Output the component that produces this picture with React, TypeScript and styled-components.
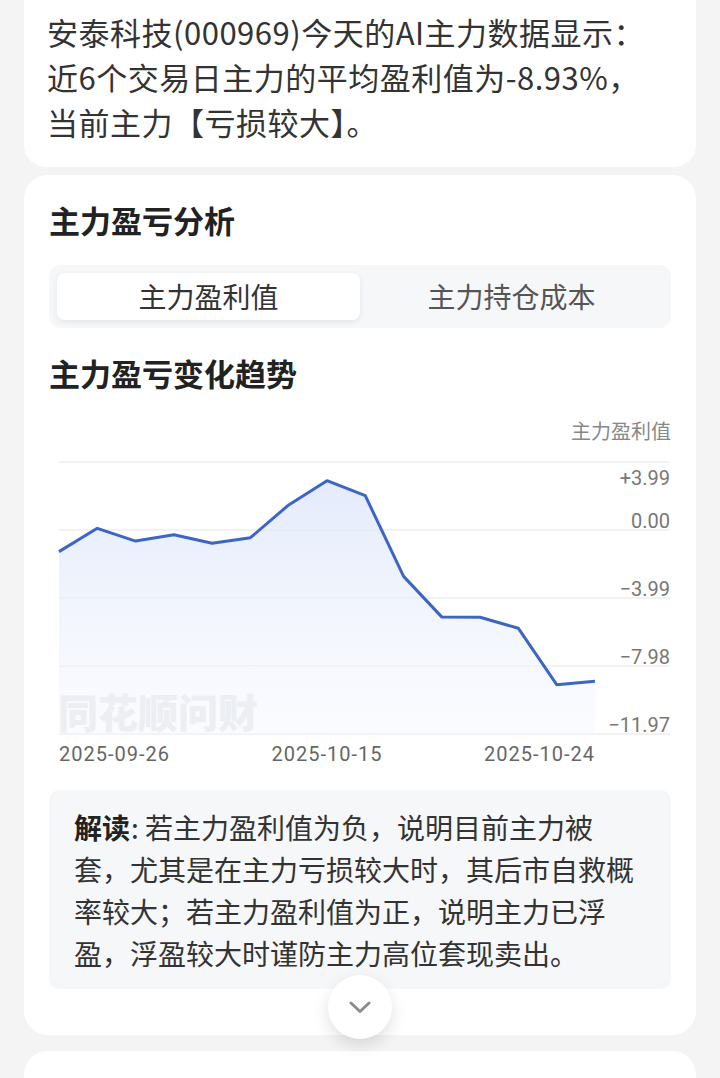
import React from 'react';
import styled, { createGlobalStyle } from 'styled-components';

const GlobalStyle = createGlobalStyle`
  html, body {
    margin: 0;
    padding: 0;
    background: #f4f4f4;
  }
  body {
    font-family: "Noto Sans CJK SC", "Noto Sans", sans-serif;
    color: #333;
  }
  * {
    box-sizing: border-box;
  }
`;

const Page = styled.div`
  display: flex;
  flex-direction: column;
  padding: 0 24px;
`;

const Card = styled.section<{ $gap?: number }>`
  background: #fff;
  border-radius: 24px;
  margin-bottom: ${({ $gap }) => $gap ?? 16}px;
`;

// Summary card (scrolled, top edge is off screen)
const SummaryCard = styled(Card)`
  border-radius: 0 0 22px 22px;
  padding: 9px 24px 23px 23px;
`;

const SummaryText = styled.p`
  margin: 0;
  font-size: 31px;
  line-height: 45px;
  letter-spacing: 0.5px;
  color: #333;
`;

// Analysis card
const AnalysisCard = styled(Card)`
  padding: 22px 25px 0;
`;

const Title = styled.h2<{ $top?: number }>`
  margin: ${({ $top }) => $top ?? 0}px 0 0;
  font-size: 31px;
  line-height: 46px;
  font-weight: 700;
  color: #222;
`;

const TabBar = styled.div`
  margin-top: 22px;
  padding: 8px;
  background: #f6f7f9;
  border-radius: 12px;
  display: grid;
  grid-template-columns: 1fr 1fr;
`;

const Tab = styled.div<{ $active?: boolean }>`
  height: 47px;
  line-height: 47px;
  text-align: center;
  font-size: 28px;
  border-radius: 8px;
  color: ${({ $active }) => ($active ? '#333' : '#555')};
  background: ${({ $active }) => ($active ? '#fff' : 'transparent')};
  box-shadow: ${({ $active }) => ($active ? '0 2px 6px rgba(0, 0, 0, 0.08)' : 'none')};
`;

const AxisTitle = styled.div`
  margin-top: 21px;
  text-align: right;
  font-size: 20px;
  line-height: 28px;
  color: #888;
`;

const Plot = styled.svg`
  display: block;
  margin-left: 10px;
  width: 612px;
  height: 295px;
  overflow: visible;
`;

const XAxis = styled.div`
  margin-left: 10px;
  width: 536px;
  display: flex;
  justify-content: space-between;
  font-family: Roboto, "Noto Sans", sans-serif;
  font-size: 20px;
  line-height: 28px;
  letter-spacing: 1px;
  color: #666;
`;

const Interpretation = styled.div`
  margin-top: 22px;
  padding: 15.5px 25px;
  background: #f6f7f9;
  border-radius: 10px;
  font-size: 28px;
  line-height: 42px;
  color: #333;
`;

const Lead = styled.strong`
  font-weight: 700;
  color: #222;
  margin-right: 1px;
`;

const ExpandButton = styled.button`
  position: relative;
  z-index: 1;
  display: flex;
  align-items: center;
  justify-content: center;
  width: 64px;
  height: 64px;
  margin: -14px auto -4px;
  padding: 0;
  border: none;
  border-radius: 50%;
  background: #fff;
  box-shadow: 0 6px 16px rgba(0, 0, 0, 0.12);
`;

const NextCard = styled(Card)`
  height: 120px;
  border-radius: 24px 24px 0 0;
`;

const values = [
  -1.27, 0.1, -0.65, -0.28, -0.78, -0.45, 1.47, 2.89, 2.01, -2.72, -5.11, -5.12, -5.77, -9.08, -8.88,
];

const grid = [17, 85, 153, 221, 289];
const yLabels = [
  { text: '+3.99', y: 40 },
  { text: '0.00', y: 83 },
  { text: '\u22123.99', y: 151 },
  { text: '\u22127.98', y: 219 },
  { text: '\u221211.97', y: 287 },
];

const toX = (i: number) => i * (536 / 14);
const toY = (v: number) => 85 - (v * 68) / 3.99;

function TrendChart() {
  const pts = values.map((v, i) => `${toX(i).toFixed(1)},${toY(v).toFixed(1)}`);
  const line = `M${pts.join(' L')}`;
  const area = `${line} L536,289 L0,289 Z`;

  return (
    <Plot viewBox="0 0 612 295">
      <defs>
        <linearGradient id="areaFill" x1="0" y1="0" x2="0" y2="1">
          <stop offset="0%" stopColor="#dfe7fa" stopOpacity="0.85" />
          <stop offset="100%" stopColor="#f3f6fe" stopOpacity="0.4" />
        </linearGradient>
      </defs>
      {grid.map((y) => (
        <line key={y} x1="0" x2="611" y1={y} y2={y} stroke="#eeeeee" strokeWidth="1.5" />
      ))}
      <text
        x="-1"
        y="283"
        fontSize="40"
        fontWeight="900"
        fill="#e9e9e9"
        fontFamily='"Noto Sans CJK SC", sans-serif'
      >
        同花顺问财
      </text>
      <path d={area} fill="url(#areaFill)" />
      <path d={line} fill="none" stroke="#3d66c4" strokeWidth="3" strokeLinejoin="round" />
      {yLabels.map((l) => (
        <text
          key={l.text}
          x="611"
          y={l.y}
          textAnchor="end"
          fontSize="20"
          fill="#777"
          fontFamily="Roboto, sans-serif"
        >
          {l.text}
        </text>
      ))}
    </Plot>
  );
}

export default function App() {
  return (
    <>
      <GlobalStyle />
      <Page>
        <SummaryCard $gap={8}>
          <SummaryText>
            安泰科技(000969)今天的AI主力数据显示：
            <br />
            近6个交易日主力的平均盈利值为-8.93%，
            <br />
            当前主力【亏损较大】。
          </SummaryText>
        </SummaryCard>

        <AnalysisCard>
          <Title>主力盈亏分析</Title>
          <TabBar>
            <Tab $active>主力盈利值</Tab>
            <Tab>主力持仓成本</Tab>
          </TabBar>
          <Title $top={22}>主力盈亏变化趋势</Title>
          <AxisTitle>主力盈利值</AxisTitle>
          <TrendChart />
          <XAxis>
            <span>2025-09-26</span>
            <span>2025-10-15</span>
            <span>2025-10-24</span>
          </XAxis>
          <Interpretation>
            <Lead>解读</Lead>: 若主力盈利值为负，说明目前主力被套，尤其是在主力亏损较大时，其后市自救概率较大；若主力盈利值为正，说明主力已浮盈，浮盈较大时谨防主力高位套现卖出。
          </Interpretation>
          <ExpandButton aria-label="展开">
            <svg width="22" height="13" viewBox="0 0 22 13">
              <polyline
                points="2,2 11,10.5 20,2"
                fill="none"
                stroke="#8c8c8c"
                strokeWidth="3"
                strokeLinecap="round"
                strokeLinejoin="round"
              />
            </svg>
          </ExpandButton>
        </AnalysisCard>

        <NextCard />
      </Page>
    </>
  );
}
